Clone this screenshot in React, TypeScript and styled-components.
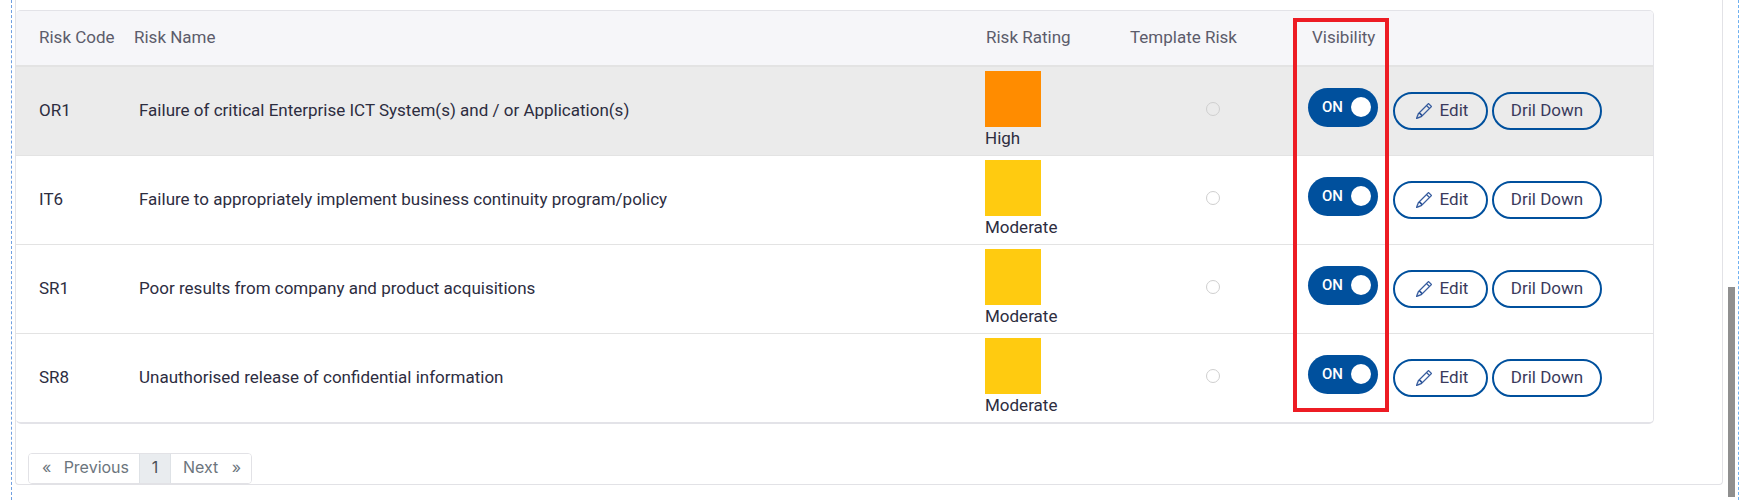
import React from 'react';
import styled, { createGlobalStyle } from 'styled-components';
import { BsPencil } from 'react-icons/bs';

const GlobalStyle = createGlobalStyle`
  html, body {
    margin: 0;
    padding: 0;
    height: 500px;
    overflow: hidden;
    background: #fff;
    font-family: Roboto, "Liberation Sans", sans-serif;
    color: #2d2d3f;
  }
`;

const Page = styled.div`
  position: relative;
  width: 1748px;
  height: 500px;
  box-sizing: border-box;
  padding-left: 11px;
`;

const Guide = styled.div`
  width: 1728px;
  height: 500px;
  box-sizing: border-box;
  border-left: 1px dashed #6f9fe0;
  border-right: 1px dashed #6fb0f0;
  padding: 0 15px 0 3px;
`;

const Panel = styled.div`
  width: 100%;
  height: 485px;
  box-sizing: border-box;
  border: 1px solid #e2e2e6;
  border-top: 0;
  border-radius: 0 0 4px 4px;
  padding-top: 10px;
`;

const Card = styled.div`
  width: 1638px;
  box-sizing: border-box;
  border: 1px solid #e3e3e8;
  border-bottom-width: 2px;
  border-left: 0;
  border-radius: 5px;
  overflow: hidden;
`;

const Table = styled.table`
  width: 100%;
  border-collapse: collapse;
  table-layout: fixed;
`;

const HeadRow = styled.tr`
  height: 55px;
  background: #f6f6f9;
  border-bottom: 2px solid #e3e3e3;
`;

const Th = styled.th<{ $w: number; $pl: number }>`
  width: ${(p) => p.$w}px;
  padding: 0 0 3px ${(p) => p.$pl}px;
  box-sizing: border-box;
  text-align: left;
  font-weight: 400;
  font-size: 17px;
  color: #5c5c6b;
  white-space: nowrap;
`;

const Row = styled.tr<{ $hl?: boolean }>`
  height: 89px;
  background: ${(p) => (p.$hl ? '#ebebeb' : '#fff')};
  border-bottom: 1px solid #e3e3e3;
  &:last-child {
    border-bottom: 0;
  }
`;

const Td = styled.td<{ $pl?: number }>`
  padding: 0 0 2px ${(p) => p.$pl ?? 0}px;
  font-size: 17px;
  color: #2d2d3f;
  white-space: nowrap;
`;

const RatingTd = styled(Td)`
  padding: 4px 0 0;
  vertical-align: top;
`;

const Swatch = styled.div<{ $color: string }>`
  width: 56px;
  height: 56px;
  background: ${(p) => p.$color};
`;

const RatingLabel = styled.div`
  font-size: 17px;
  line-height: 20px;
  margin-top: 1px;
`;

const Radio = styled.span`
  display: block;
  width: 14px;
  height: 14px;
  box-sizing: border-box;
  border: 1.5px solid #cfcfcf;
  border-radius: 50%;
  background: transparent;
  margin: -2px 0 0 1px;
`;

const Toggle = styled.div`
  width: 70px;
  height: 39px;
  box-sizing: border-box;
  border-radius: 20px;
  background: #00509d;
  color: #fff;
  display: flex;
  align-items: center;
  padding: 0 7px 0 14px;
  justify-content: space-between;
  font-size: 15px;
  font-weight: 500;
  margin: -5px 0 0 -4px;
`;

const ToggleLabel = styled.span`
  margin-top: -1px;
`;

const Knob = styled.span`
  width: 20px;
  height: 20px;
  border-radius: 50%;
  background: #fff;
`;

const Actions = styled.div`
  display: flex;
  gap: 4px;
  margin-top: 2px;
`;

const Pill = styled.button<{ $w: number }>`
  width: ${(p) => p.$w}px;
  height: 38px;
  box-sizing: border-box;
  border: 2px solid #00509d;
  border-radius: 19px;
  background: transparent;
  color: #3a3a5c;
  font-family: inherit;
  font-size: 17px;
  display: flex;
  align-items: center;
  justify-content: center;
  gap: 8px;
  padding: 0 0 2px;
`;

const EditPill = styled(Pill)`
  padding-left: 3px;
`;

const PencilIcon = styled(BsPencil)`
  color: #2a5298;
  stroke: currentColor;
  stroke-width: 0.3;
  margin-top: 2px;
`;

const Pager = styled.div`
  display: inline-flex;
  margin: 29px 0 0 12px;
  height: 29px;
  border: 1px solid #e2e2e6;
  border-radius: 4px;
  overflow: hidden;
  font-family: Inter, Roboto, sans-serif;
  font-size: 16px;
  color: #6c757d;
`;

const PageCell = styled.div<{ $w: number; $active?: boolean }>`
  width: ${(p) => p.$w}px;
  box-sizing: border-box;
  display: flex;
  align-items: center;
  justify-content: ${(p) => (p.$active ? 'center' : 'space-between')};
  padding: ${(p) => (p.$active ? '0 0 3px' : '0 10px 3px 13px')};
  background: ${(p) => (p.$active ? '#e9ecef' : '#fff')};
  color: ${(p) => (p.$active ? '#495057' : '#6c757d')};
  border-left: ${(p) => (p.$active ? '1px solid #dee2e6' : '0')};
  border-right: ${(p) => (p.$active ? '1px solid #dee2e6' : '0')};
  &:last-child {
    padding-left: 12px;
  }
`;

const ScrollThumb = styled.div`
  position: absolute;
  left: 1728px;
  top: 287px;
  width: 7px;
  height: 210px;
  background: #8f8f8f;
`;

const Highlight = styled.div`
  position: absolute;
  left: 1293px;
  top: 18px;
  width: 96px;
  height: 394px;
  box-sizing: border-box;
  border: 4px solid #ed1c24;
`;

const rows = [
  { code: 'OR1', name: 'Failure of critical Enterprise ICT System(s) and / or Application(s)', rating: 'High', color: '#ff8c00' },
  { code: 'IT6', name: 'Failure to appropriately implement business continuity program/policy', rating: 'Moderate', color: '#ffcb10' },
  { code: 'SR1', name: 'Poor results from company and product acquisitions', rating: 'Moderate', color: '#ffcb10' },
  { code: 'SR8', name: 'Unauthorised release of confidential information', rating: 'Moderate', color: '#ffcb10' },
];

export default function App() {
  return (
    <Page>
      <GlobalStyle />
      <Guide>
        <Panel>
          <Card>
            <Table>
              <thead>
                <HeadRow>
                  <Th $w={118} $pl={23}>Risk Code</Th>
                  <Th $w={851} $pl={0}>Risk Name</Th>
                  <Th $w={145} $pl={1}>Risk Rating</Th>
                  <Th $w={182} $pl={0}>Template Risk</Th>
                  <Th $w={81} $pl={0}>Visibility</Th>
                  <Th $w={261} $pl={0} />
                </HeadRow>
              </thead>
              <tbody>
                {rows.map((r, i) => (
                  <Row key={r.code} $hl={i === 0}>
                    <Td $pl={23}>{r.code}</Td>
                    <Td $pl={5}>{r.name}</Td>
                    <RatingTd>
                      <Swatch $color={r.color} />
                      <RatingLabel>{r.rating}</RatingLabel>
                    </RatingTd>
                    <Td $pl={75}>
                      <Radio />
                    </Td>
                    <Td>
                      <Toggle>
                        <ToggleLabel>ON</ToggleLabel>
                        <Knob />
                      </Toggle>
                    </Td>
                    <Td>
                      <Actions>
                        <EditPill $w={95}>
                          <PencilIcon size={16} />
                          Edit
                        </EditPill>
                        <Pill $w={110}>Dril Down</Pill>
                      </Actions>
                    </Td>
                  </Row>
                ))}
              </tbody>
            </Table>
          </Card>
          <Pager>
            <PageCell $w={110}>
              <span>«</span>
              <span>Previous</span>
            </PageCell>
            <PageCell $w={32} $active>1</PageCell>
            <PageCell $w={80}>
              <span>Next</span>
              <span>»</span>
            </PageCell>
          </Pager>
        </Panel>
      </Guide>
      <ScrollThumb />
      <Highlight />
    </Page>
  );
}
